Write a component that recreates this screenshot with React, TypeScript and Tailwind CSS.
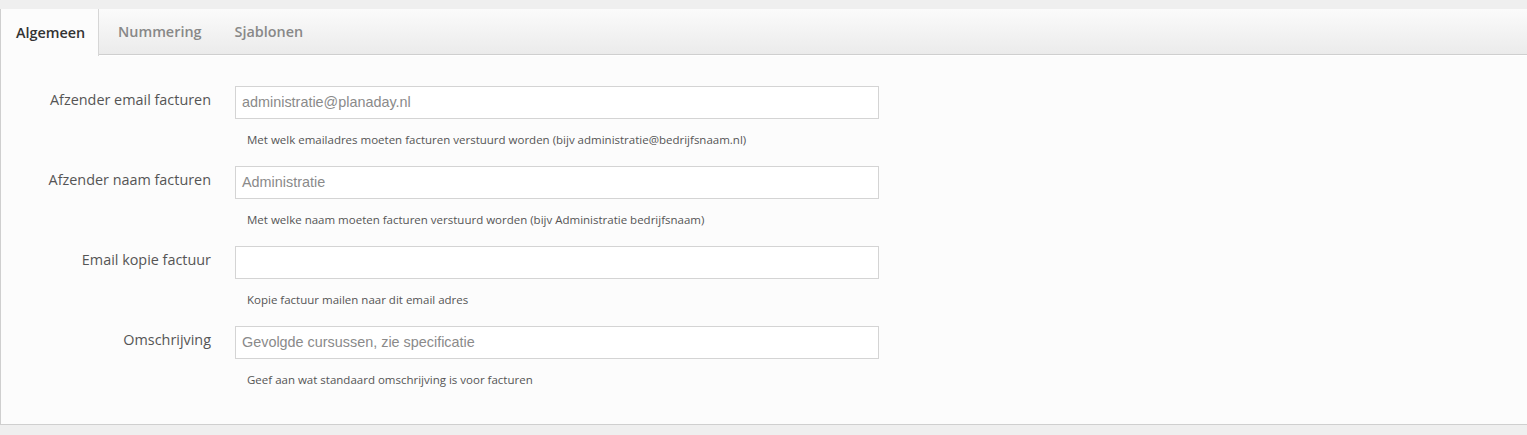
import React from "react";

const rows = [
  { label: "Afzender email facturen", value: "administratie@planaday.nl", help: "Met welk emailadres moeten facturen verstuurd worden (bijv administratie@bedrijfsnaam.nl)" },
  { label: "Afzender naam facturen", value: "Administratie", help: "Met welke naam moeten facturen verstuurd worden (bijv Administratie bedrijfsnaam)" },
  { label: "Email kopie factuur", value: "", help: "Kopie factuur mailen naar dit email adres" },
  { label: "Omschrijving", value: "Gevolgde cursussen, zie specificatie", help: "Geef aan wat standaard omschrijving is voor facturen" },
];

export default function App() {
  return (
    <div className="w-[1527px] h-[435px] bg-[#efefef] pt-[9px] overflow-hidden" style={{ fontFamily: '"Open Sans", sans-serif' }}>
      <div className="bg-[#fcfcfc] border-l border-b border-[#cfcfcf] h-[416px]">
        <div className="flex h-[46px] bg-gradient-to-b from-[#fbfbfb] to-[#ebebeb] border-b border-[#cfcfcf] shadow-[0_1px_0_#ffffff]">
          <div className="h-[47px] w-[98px] bg-[#fcfcfc] border-r border-[#d6d6d6] flex items-center pl-[15px] text-[14.4px] font-semibold text-[#333]">Algemeen</div>
          <div className="flex items-center pl-[19px] text-[14.4px] font-semibold text-[#888]">Nummering</div>
          <div className="flex items-center pl-[33px] text-[14.4px] font-semibold text-[#888]">Sjablonen</div>
        </div>
        <div className="pt-[31px] flex flex-col gap-[17px]">
          {rows.map((r) => (
            <div key={r.label} className="flex">
              <div className="w-[210px] text-right text-[14.4px] text-[#555] pt-[4px] leading-[20px]">{r.label}</div>
              <div className="ml-[24px] w-[644px]">
                <div className="h-[33px] border border-[#d4d4d4] bg-white flex items-center px-[6px] text-[14.4px] text-[#8a8a8a]" style={{ fontFamily: '"Liberation Sans", Arial, sans-serif' }}>
                  {r.value}
                </div>
                <div className="pl-[12px] mt-[11px] text-[11.5px] leading-[19px] text-[#555]">{r.help}</div>
              </div>
            </div>
          ))}
        </div>
      </div>
    </div>
  );
}
